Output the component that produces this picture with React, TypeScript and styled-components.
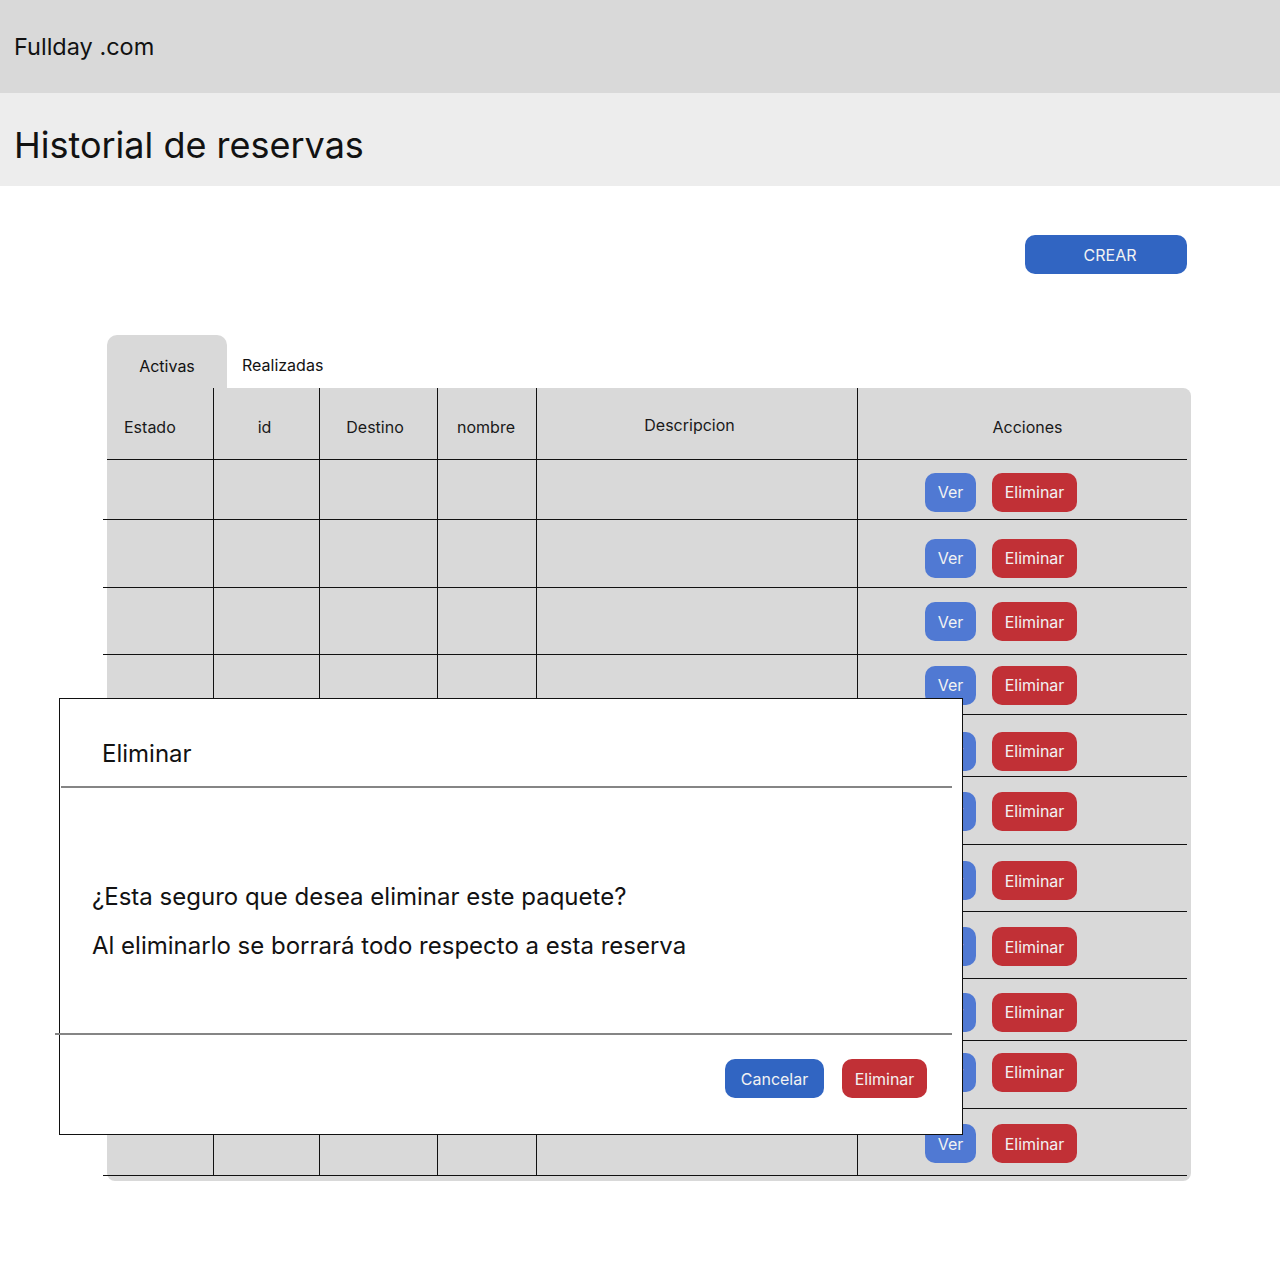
import React from "react";
import styled, { createGlobalStyle } from "styled-components";

const Global = createGlobalStyle`
  html, body { margin: 0; padding: 0; background: #fff; }
  body { font-family: Inter, "Noto Sans", sans-serif; color: #121212; }
  * { box-sizing: border-box; }
`;

const Page = styled.div`
  position: relative;
  width: 1280px;
  min-height: 1280px;
`;

const TopBar = styled.header`
  height: 93px;
  background: #d9d9d9;
  display: flex;
  align-items: center;
  padding: 0 0 1px 14px;
  font-size: 23.5px;
`;

const TitleBar = styled.div`
  height: 93px;
  background: #ededed;
  display: flex;
  align-items: center;
  padding: 11px 0 0 14px;
  font-size: 36px;
`;

const Toolbar = styled.div`
  display: flex;
  justify-content: flex-end;
  padding: 49px 93px 0 0;
`;

const colors = {
  primary: "#3165c2",
  view: "#5079d3",
  danger: "#c13036",
};

const Button = styled.button<{ $variant: keyof typeof colors; $w: number; $shift?: number }>`
  width: ${(p) => p.$w}px;
  height: 39px;
  border: none;
  border-radius: 10px;
  background: ${(p) => colors[p.$variant]};
  color: #f2f2f2;
  font-family: Inter, "Noto Sans", sans-serif;
  font-size: 16px;
  padding: 0 0 0 ${(p) => p.$shift ?? 0}px;
  display: inline-flex;
  align-items: center;
  justify-content: center;
  cursor: pointer;
`;

const Tabs = styled.div`
  display: flex;
  align-items: stretch;
  margin: 61px 0 0 107px;
  height: 53px;
`;

const Tab = styled.div<{ $active?: boolean }>`
  width: ${(p) => (p.$active ? "120px" : "auto")};
  padding: ${(p) => (p.$active ? "8px 0 0" : "6px 0 0 15px")};
  background: ${(p) => (p.$active ? "#d9d9d9" : "transparent")};
  border-radius: 10px 10px 0 0;
  display: flex;
  align-items: center;
  justify-content: ${(p) => (p.$active ? "center" : "flex-start")};
  font-size: 16px;
`;

const Panel = styled.div`
  margin-left: 107px;
  width: 1084px;
  background: #d9d9d9;
  border-radius: 0 8px 8px 8px;
  padding-bottom: 5px;
`;

const Row = styled.div<{ $h: number; $head?: boolean }>`
  position: relative;
  display: grid;
  grid-template-columns: 106px 106px 118px 99px 321px 1fr;
  height: ${(p) => p.$h}px;
  &::after {
    content: "";
    position: absolute;
    left: ${(p) => (p.$head ? "0" : "-4px")};
    right: 4px;
    bottom: 0;
    height: 1px;
    background: #111;
  }
`;

const Cell = styled.div<{ $first?: boolean; $top?: number; $dx?: number }>`
  border-left: ${(p) => (p.$first ? "none" : "1px solid #111")};
  display: flex;
  align-items: center;
  justify-content: ${(p) => (p.$first ? "flex-start" : "center")};
  padding-left: ${(p) => (p.$first ? 17 : Math.max(0, p.$dx ?? 0))}px;
  padding-right: ${(p) => Math.max(0, -(p.$dx ?? 0))}px;
  padding-top: ${(p) => p.$top ?? 0}px;
  font-size: 16px;
  color: #1a1a1a;
`;

const Actions = styled.div<{ $dy: number }>`
  border-left: 1px solid #111;
  display: flex;
  align-items: center;
  gap: 16px;
  padding: ${(p) => Math.max(0, p.$dy)}px 0 ${(p) => Math.max(0, -p.$dy)}px 67px;
`;

const Modal = styled.div`
  position: absolute;
  left: 59px;
  top: 698px;
  width: 904px;
  height: 437px;
  background: #fff;
  border: 1px solid #111;
  display: flex;
  flex-direction: column;
`;

const ModalTitle = styled.div`
  height: 87px;
  padding: 40px 0 0 42px;
  font-size: 24px;
  line-height: 29px;
`;

const Divider = styled.div<{ $left: number }>`
  height: 2px;
  background: #858585;
  margin: 0 10px 0 ${(p) => p.$left}px;
`;

const ModalBody = styled.div`
  height: 245px;
  padding: 94px 0 0 32px;
  display: flex;
  flex-direction: column;
  gap: 20px;
  font-size: 24px;
  line-height: 29px;
`;

const ModalFooter = styled.div`
  display: flex;
  justify-content: flex-end;
  gap: 18px;
  padding: 24px 35px 0 0;
`;

const rows = [
  { h: 60, dy: 4 },
  { h: 68, dy: 8 },
  { h: 67, dy: 0 },
  { h: 60, dy: 0 },
  { h: 62, dy: 10 },
  { h: 68, dy: 0 },
  { h: 67, dy: 4 },
  { h: 67, dy: 2 },
  { h: 62, dy: 4 },
  { h: 68, dy: -6 },
  { h: 67, dy: 2 },
];

export default function App() {
  return (
    <Page>
      <Global />
      <TopBar>Fullday .com</TopBar>
      <TitleBar>Historial de reservas</TitleBar>
      <Toolbar>
        <Button $variant="primary" $w={162} $shift={8}>CREAR</Button>
      </Toolbar>
      <Tabs>
        <Tab $active>Activas</Tab>
        <Tab>Realizadas</Tab>
      </Tabs>
      <Panel>
        <Row $h={72} $head>
          <Cell $first $top={6}>Estado</Cell>
          <Cell $top={6} $dx={-4}>id</Cell>
          <Cell $top={6} $dx={-7}>Destino</Cell>
          <Cell $top={6} $dx={-2}>nombre</Cell>
          <Cell $top={2} $dx={-15}>Descripcion</Cell>
          <Cell $top={6} $dx={6}>Acciones</Cell>
        </Row>
        {rows.map((r, i) => (
          <Row key={i} $h={r.h}>
            <Cell $first />
            <Cell />
            <Cell />
            <Cell />
            <Cell />
            <Actions $dy={r.dy}>
              <Button $variant="view" $w={51}>Ver</Button>
              <Button $variant="danger" $w={85}>Eliminar</Button>
            </Actions>
          </Row>
        ))}
      </Panel>
      <Modal>
        <ModalTitle>Eliminar</ModalTitle>
        <Divider $left={1} />
        <ModalBody>
          <div>¿Esta seguro que desea eliminar este paquete?</div>
          <div>Al eliminarlo se borrará todo respecto a esta reserva</div>
        </ModalBody>
        <Divider $left={-5} />
        <ModalFooter>
          <Button $variant="primary" $w={99}>Cancelar</Button>
          <Button $variant="danger" $w={85}>Eliminar</Button>
        </ModalFooter>
      </Modal>
    </Page>
  );
}
